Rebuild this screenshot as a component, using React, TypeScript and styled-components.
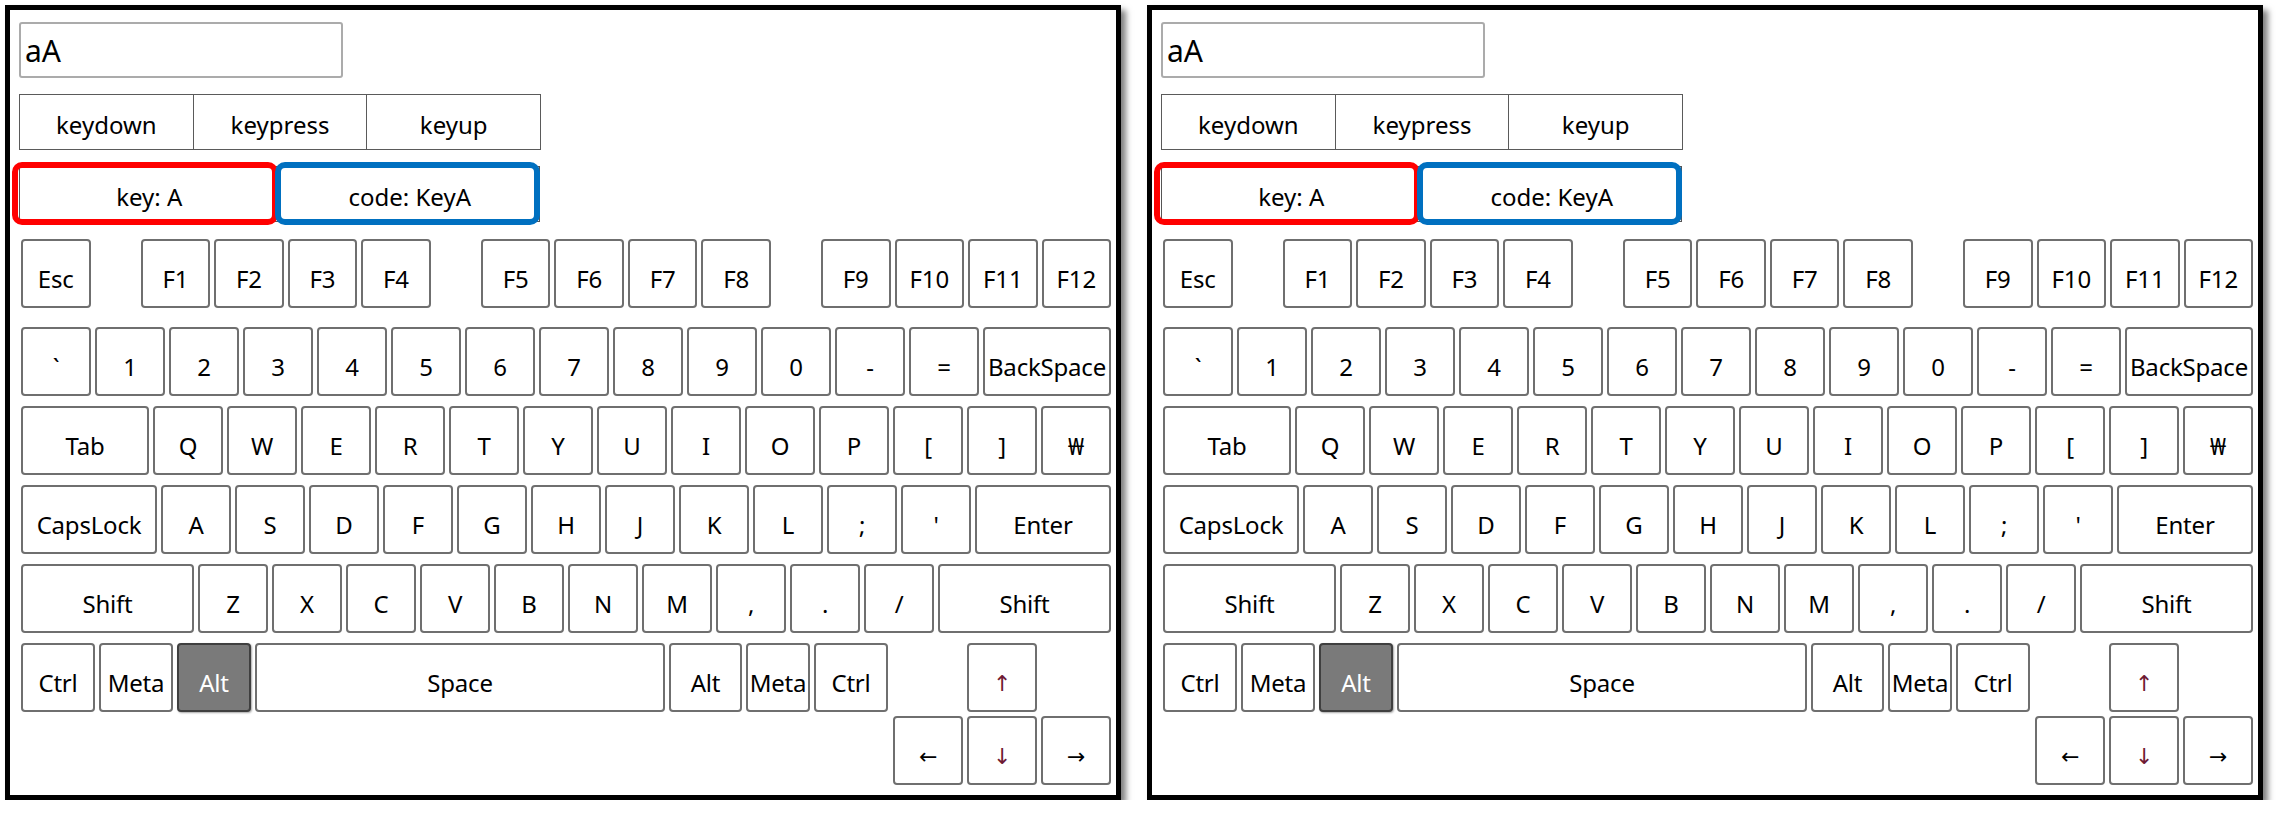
import styled, { createGlobalStyle } from "styled-components";

type KeyDef = {
  label?: string;
  w?: number;
  fill?: boolean;
  spacer?: boolean;
  active?: boolean;
};

const fnRow: KeyDef[] = [
  { label: "Esc", w: 69.5 },
  { spacer: true },
  { label: "F1", w: 69.5 },
  { label: "F2", w: 69.5 },
  { label: "F3", w: 69.5 },
  { label: "F4", w: 69.5 },
  { spacer: true },
  { label: "F5", w: 69.5 },
  { label: "F6", w: 69.5 },
  { label: "F7", w: 69.5 },
  { label: "F8", w: 69.5 },
  { spacer: true },
  { label: "F9", w: 69.5 },
  { label: "F10", w: 69.5 },
  { label: "F11", w: 69.5 },
  { label: "F12", w: 69.5 },
];

const unit = (labels: string[]): KeyDef[] => labels.map((label) => ({ label, w: 70 }));

const mainRows: KeyDef[][] = [
  [...unit(["`", "1", "2", "3", "4", "5", "6", "7", "8", "9", "0", "-", "="]), { label: "BackSpace", fill: true }],
  [{ label: "Tab", fill: true }, ...unit(["Q", "W", "E", "R", "T", "Y", "U", "I", "O", "P", "[", "]", "₩"])],
  [
    { label: "CapsLock", fill: true },
    ...unit(["A", "S", "D", "F", "G", "H", "J", "K", "L", ";", "'"]),
    { label: "Enter", fill: true },
  ],
  [
    { label: "Shift", fill: true },
    ...unit(["Z", "X", "C", "V", "B", "N", "M", ",", ".", "/"]),
    { label: "Shift", fill: true },
  ],
];

const modRow: KeyDef[] = [
  { label: "Ctrl", w: 74 },
  { label: "Meta", w: 74 },
  { label: "Alt", w: 74, active: true },
  { label: "Space", w: 410 },
  { label: "Alt", w: 73 },
  { label: "Meta", w: 64 },
  { label: "Ctrl", w: 74 },
];

const GlobalStyle = createGlobalStyle`
  html, body {
    margin: 0;
    padding: 0;
    background: #fff;
  }
  body {
    font-family: "Noto Sans", "Open Sans", sans-serif;
    color: #000;
  }
`;

const Page = styled.div`
  display: flex;
  gap: 26px;
  padding: 5px 0 0 5px;
`;

const Panel = styled.div`
  box-sizing: border-box;
  width: 1116px;
  height: 795px;
  flex: none;
  border: 5px solid #000;
  background: #fff;
  box-shadow: 5px 5px 6px rgba(0, 0, 0, 0.5);
  padding: 12px 0 0 9px;
  display: flex;
  flex-direction: column;
`;

const TextInput = styled.input`
  box-sizing: border-box;
  width: 324px;
  height: 56px;
  border: 2px solid #ababab;
  border-radius: 3px;
  padding: 0 0 0 4px;
  font-family: "Noto Sans", "Open Sans", sans-serif;
  font-size: 30px;
  color: #000;
  outline: none;
`;

const EventTabs = styled.div`
  display: flex;
  width: 522px;
  height: 56px;
  margin-top: 16px;
  box-sizing: border-box;
  border: 1px solid #5a5a5a;
`;

const EventTab = styled.div`
  flex: 1 1 0;
  display: flex;
  align-items: center;
  justify-content: center;
  padding-top: 5px;
  font-size: 24px;
  & + & {
    border-left: 1px solid #5a5a5a;
  }
`;

const InfoRow = styled.div`
  display: flex;
  width: 521px;
  height: 56px;
  margin-top: 16px;
`;

const InfoCell = styled.div<{ $ring: string; $left: number; $right: number }>`
  position: relative;
  flex: 1 1 0;
  box-sizing: border-box;
  border: 1px solid #555;
  display: flex;
  align-items: center;
  justify-content: center;
  padding-top: 5px;
  font-size: 24px;

  &::after {
    content: "";
    position: absolute;
    top: -5px;
    bottom: -4px;
    left: ${(p) => p.$left}px;
    right: ${(p) => p.$right}px;
    border: 6px solid ${(p) => p.$ring};
    border-radius: 10px;
    pointer-events: none;
  }
`;

const Keyboard = styled.div`
  width: 1090px;
  margin: 17px 0 0 2px;
  display: flex;
  flex-direction: column;
  gap: 10px;
`;

const KeyRow = styled.div<{ $after?: number }>`
  display: flex;
  gap: 4px;
  margin-bottom: ${(p) => p.$after ?? 0}px;
`;

const BottomRow = styled.div`
  display: flex;
  align-items: flex-start;
  justify-content: space-between;
`;

const ModKeys = styled.div`
  display: flex;
  gap: 4px;
`;

const ArrowCluster = styled.div`
  display: grid;
  grid-template-columns: repeat(3, 70px);
  grid-template-rows: 69px 69px;
  gap: 4px;
`;

const Spacer = styled.div`
  flex: 1 1 0;
`;

const Key = styled.div<{ $w?: number; $fill?: boolean; $active?: boolean }>`
  box-sizing: border-box;
  height: 69px;
  width: ${(p) => (p.$w ? `${p.$w}px` : "auto")};
  flex: ${(p) => (p.$fill ? "1 1 0" : "none")};
  border: 2px solid ${(p) => (p.$active ? "#3f3f3f" : "#6f6f6f")};
  border-radius: 4px;
  background: ${(p) => (p.$active ? "#7a7a7a" : "#fff")};
  color: ${(p) => (p.$active ? "#fff" : "#000")};
  box-shadow: ${(p) => (p.$active ? "1px 1px 2px rgba(0,0,0,0.35)" : "none")};
  display: flex;
  align-items: center;
  justify-content: center;
  padding-top: 9px;
  font-size: 24px;
  white-space: nowrap;
  overflow: hidden;
  letter-spacing: -0.2px;
`;

const ArrowKey = styled(Key)<{ $col?: number; $vertical?: boolean }>`
  grid-column: ${(p) => p.$col ?? "auto"};
  font-family: "DejaVu Sans", sans-serif;
  font-size: 22px;
  padding-top: 12px;
  color: ${(p) => (p.$vertical ? "#6e1a34" : "#000")};
`;

const renderKeys = (keys: KeyDef[]) =>
  keys.map((k, i) =>
    k.spacer ? (
      <Spacer key={i} />
    ) : (
      <Key key={i} $w={k.w} $fill={k.fill} $active={k.active}>
        {k.label}
      </Key>
    )
  );

const KeyboardPanel = () => (
  <Panel>
    <TextInput defaultValue="aA" readOnly />
    <EventTabs>
      <EventTab>keydown</EventTab>
      <EventTab>keypress</EventTab>
      <EventTab>keyup</EventTab>
    </EventTabs>
    <InfoRow>
      <InfoCell $ring="#ff0000" $left={-8} $right={1}>
        key: A
      </InfoCell>
      <InfoCell $ring="#0070c0" $left={-6} $right={-1}>
        code: KeyA
      </InfoCell>
    </InfoRow>
    <Keyboard>
      <KeyRow $after={9}>{renderKeys(fnRow)}</KeyRow>
      {mainRows.map((row, i) => (
        <KeyRow key={i}>{renderKeys(row)}</KeyRow>
      ))}
      <BottomRow>
        <ModKeys>{renderKeys(modRow)}</ModKeys>
        <ArrowCluster>
          <ArrowKey $col={2} $vertical>
            ↑
          </ArrowKey>
          <ArrowKey $col={1}>←</ArrowKey>
          <ArrowKey $vertical>↓</ArrowKey>
          <ArrowKey>→</ArrowKey>
        </ArrowCluster>
      </BottomRow>
    </Keyboard>
  </Panel>
);

export default function App() {
  return (
    <>
      <GlobalStyle />
      <Page>
        <KeyboardPanel />
        <KeyboardPanel />
      </Page>
    </>
  );
}
